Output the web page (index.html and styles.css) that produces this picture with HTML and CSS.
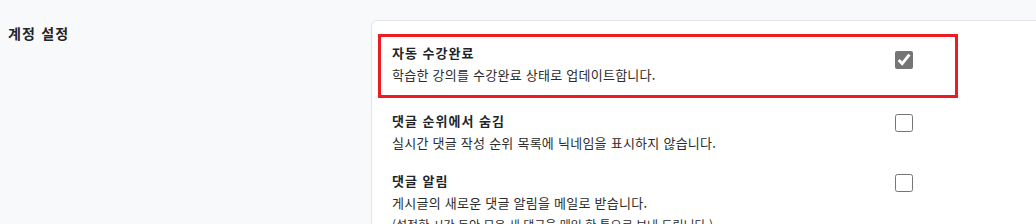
FILE: index.html
```html
<!DOCTYPE html>
<html lang="ko">

<head>
    <meta charset="UTF-8">
    <meta name="viewport" content="width=device-width, initial-scale=1.0">
    <title>계정 설정</title>
    <link rel="stylesheet" href="styles.css">
</head>

<body>
    <div class="settings-row">
        <h3 class="settings-label">계정 설정</h3>

        <div class="settings-card">
            <div class="setting-item highlighted">
                <div class="setting-text">
                    <div class="setting-title">자동 수강완료</div>
                    <div class="setting-desc">학습한 강의를 수강완료 상태로 업데이트합니다.</div>
                </div>
                <div class="setting-control">
                    <input type="checkbox" id="autoComplete" checked>
                </div>
            </div>

            <div class="setting-item">
                <div class="setting-text">
                    <div class="setting-title">댓글 순위에서 숨김</div>
                    <div class="setting-desc">실시간 댓글 작성 순위 목록에 닉네임을 표시하지 않습니다.</div>
                </div>
                <div class="setting-control">
                    <input type="checkbox" id="hideRank">
                </div>
            </div>

            <div class="setting-item">
                <div class="setting-text">
                    <div class="setting-title">댓글 알림</div>
                    <div class="setting-desc">게시글의 새로운 댓글 알림을 메일로 받습니다.</div>
                    <div class="setting-note">(설정한 시간 동안 모은 새 댓글을 메일 한 통으로 보내 드립니다.)</div>
                </div>
                <div class="setting-control">
                    <input type="checkbox" id="commentMail">
                </div>
            </div>
        </div>
    </div>
</body>

</html>
```

FILE: styles.css
```css
/* account settings */
html,
body {
    margin: 0;
    overflow: hidden;
}

body {
    font-family: "Noto Sans CJK KR", "Noto Sans", sans-serif;
    background-color: #f8f9fa;
    color: #212529;
    padding: 20px 0 0 8px;
}

.settings-row {
    display: flex;
    align-items: flex-start;
}

.settings-label {
    width: 363px;
    flex-shrink: 0;
    margin: 2px 0 0;
    font-size: 14px;
    line-height: 22px;
    font-weight: bold;
    letter-spacing: 1.2px;
    color: #212529;
}

.settings-card {
    width: 720px;
    flex-shrink: 0;
    background-color: #fff;
    border: 1px solid #e3e5e8;
    border-radius: 6px;
    padding: 13px 6px 0;
    min-height: 240px;
}

.setting-item {
    width: 580px;
    box-sizing: border-box;
    display: flex;
    padding: 8px 14px;
}

.setting-item.highlighted {
    border: 3px solid #ed1c24;
    padding: 5px 11px 9px;
    margin-bottom: 4px;
}

.setting-text {
    flex: 1;
}

.setting-title {
    font-size: 13px;
    line-height: 22px;
    font-weight: bold;
    letter-spacing: 1px;
    color: #212529;
}

.setting-desc {
    font-size: 13px;
    line-height: 22px;
    letter-spacing: 0.25px;
    color: #2b2b2b;
}

.setting-note {
    font-size: 12px;
    line-height: 18px;
    padding-top: 2px;
    color: #2b2b2b;
}

.setting-control {
    width: 80px;
    display: flex;
    justify-content: center;
    align-items: flex-start;
}

.setting-control input {
    width: 18px;
    height: 18px;
    margin: 4px 0 0;
    accent-color: #757575;
}

.highlighted .setting-control input {
    margin-top: 9px;
}
```
